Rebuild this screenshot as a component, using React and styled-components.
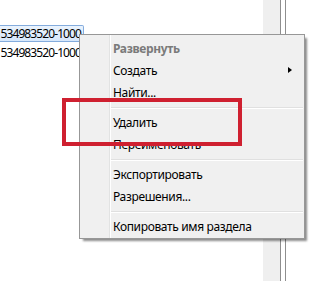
import React from "react";
import styled, { createGlobalStyle } from "styled-components";

const GlobalStyle = createGlobalStyle`
  html, body {
    margin: 0;
    padding: 0;
    background: #fff;
    overflow: hidden;
  }
  body {
    font-family: "Noto Sans", "Open Sans", sans-serif;
    font-size: 12px;
    color: #000;
  }
`;

const Screen = styled.div`
  position: relative;
  width: 327px;
  height: 281px;
  overflow: hidden;
  display: flex;
  background: #fff;
`;

const TreePane = styled.div`
  width: 263px;
  flex-shrink: 0;
`;

const Tree = styled.div`
  width: 84px;
  padding-top: 25px;
  display: flex;
  flex-direction: column;
  align-items: flex-end;
  gap: 2px;
  white-space: nowrap;
`;

const TreeRow = styled.div`
  height: 17px;
  line-height: 15px;
  box-sizing: border-box;
  padding: 0 2px 0 1px;
  letter-spacing: -0.9px;
  border: 1px solid ${(p) => (p.selected ? "#84acdd" : "transparent")};
  border-left: 0;
  border-radius: 0 2px 2px 0;
  background: ${(p) =>
    p.selected ? "linear-gradient(#eaf3fd, #d6e7fb)" : "transparent"};
`;

const Strip = styled.div`
  width: 17px;
  flex-shrink: 0;
  background: #efefef;
`;

const Line = styled.div`
  width: 1px;
  flex-shrink: 0;
  background: #8e8e8e;
`;

const Gap = styled.div`
  width: ${(p) => p.w}px;
  flex-shrink: 0;
`;

const Menu = styled.div`
  position: absolute;
  left: 79px;
  top: 34px;
  width: 226px;
  box-sizing: border-box;
  padding: 2px 1px 1px 0;
  border: 1px solid #979797;
  background: linear-gradient(
      to right,
      transparent 29px,
      #e2e3e3 29px,
      #e2e3e3 30px,
      #ffffff 30px,
      #ffffff 31px,
      transparent 31px
    ),
    #f0f0f0;
  box-shadow: 3px 3px 2px -1px rgba(0, 0, 0, 0.45);
`;

const Item = styled.div`
  position: relative;
  height: 22px;
  line-height: 23px;
  padding-left: 33px;
  white-space: nowrap;
  letter-spacing: -0.35px;
  font-weight: ${(p) => (p.bold ? 700 : 400)};
  color: ${(p) => (p.disabled ? "#7a7a7a" : "#000")};
`;

const Arrow = styled.span`
  position: absolute;
  right: 11px;
  top: 8px;
  width: 0;
  height: 0;
  border-top: 3.5px solid transparent;
  border-bottom: 3.5px solid transparent;
  border-left: 4px solid #000;
`;

const Separator = styled.div`
  margin: 4px 0 3px 31px;
  height: 0;
  border-top: 1px solid #e0e0e0;
  box-shadow: 0 1px 0 #fff;
`;

const Highlight = styled.div`
  position: absolute;
  left: 62px;
  top: 98px;
  width: 180px;
  height: 48px;
  box-sizing: border-box;
  border: 4px solid #cf2030;
`;

export default function App() {
  return (
    <>
      <GlobalStyle />
      <Screen>
        <TreePane>
          <Tree>
            <TreeRow selected>534983520-1000</TreeRow>
            <TreeRow>534983520-1000</TreeRow>
          </Tree>
        </TreePane>
        <Strip />
        <Line />
        <Gap w={4} />
        <Line />

        <Menu>
          <Item bold disabled>Развернуть</Item>
          <Item>
            Создать
            <Arrow />
          </Item>
          <Item>Найти...</Item>
          <Separator />
          <Item>Удалить</Item>
          <Item>Переименовать</Item>
          <Separator />
          <Item>Экспортировать</Item>
          <Item>Разрешения...</Item>
          <Separator />
          <Item>Копировать имя раздела</Item>
        </Menu>

        <Highlight />
      </Screen>
    </>
  );
}
